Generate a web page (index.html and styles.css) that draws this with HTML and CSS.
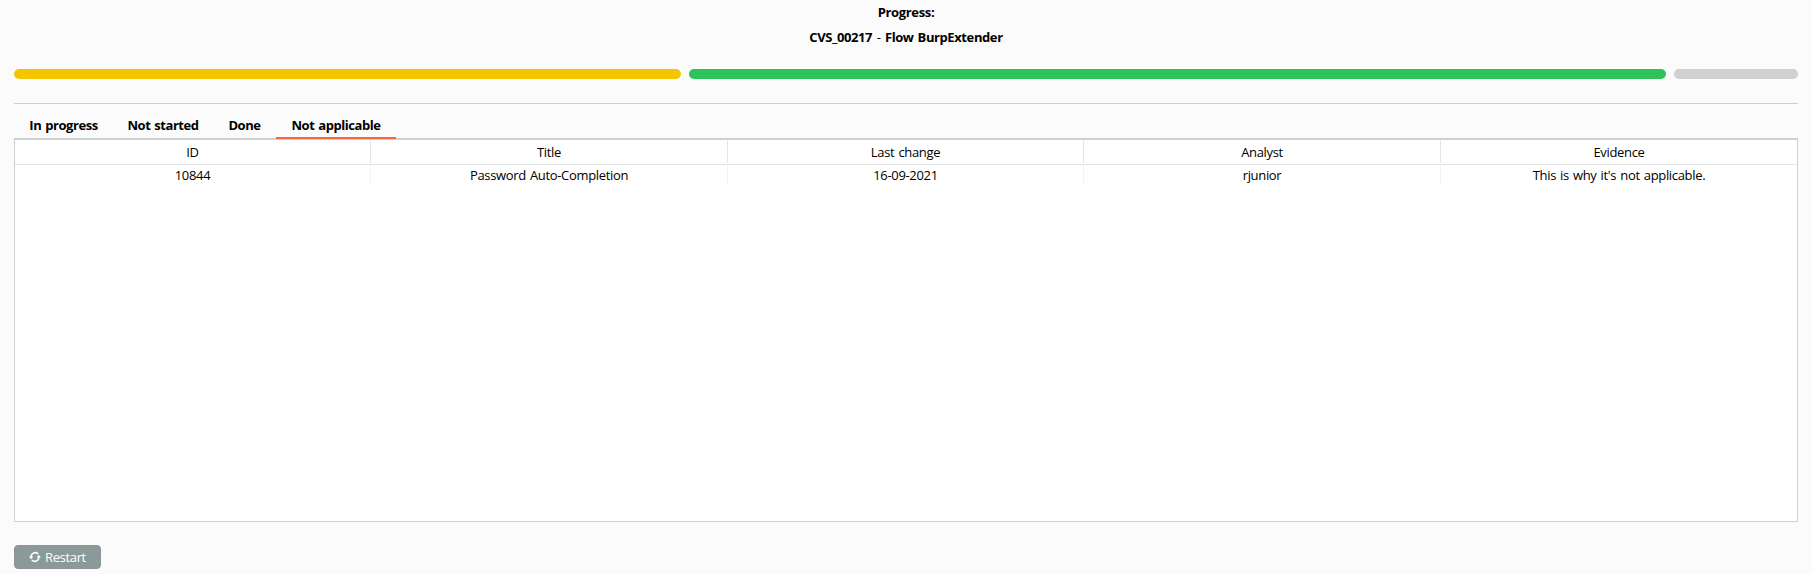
FILE: index.html
```html
<!DOCTYPE html>
<html lang="en">
<head>
<meta charset="utf-8">
<title>Progress</title>
<link rel="stylesheet" href="styles.css">
</head>
<body>
<header class="heading">
  <div class="line label">Progress:</div>
  <div class="line name">CVS_00217 <span class="dash">-</span> Flow BurpExtender</div>
</header>
<div class="progress">
  <div class="segment in-progress"></div>
  <div class="segment done"></div>
  <div class="segment remaining"></div>
</div>
<nav class="tabs">
  <div class="tab t1">In progress</div>
  <div class="tab t2">Not started</div>
  <div class="tab t3">Done</div>
  <div class="tab t4 active">Not applicable</div>
</nav>
<main class="panel">
  <div class="row head">
    <div class="cell">ID</div>
    <div class="cell">Title</div>
    <div class="cell">Last change</div>
    <div class="cell">Analyst</div>
    <div class="cell">Evidence</div>
  </div>
  <div class="row">
    <div class="cell">10844</div>
    <div class="cell">Password Auto-Completion</div>
    <div class="cell">16-09-2021</div>
    <div class="cell">rjunior</div>
    <div class="cell">This is why it's not applicable.</div>
  </div>
</main>
<button class="restart" type="button">
  <svg class="icon" viewBox="0 0 12 12" width="12" height="12" fill="none" stroke="#fff" stroke-width="1.5">
    <path d="M2 6.4C2 2.2 6 .2 9.2 2.9M10 5.6C10 9.8 6 11.8 2.8 9.1"/>
    <path d="M0 5.4H4.4L2.2 8.2zM12 6.6H7.6L9.8 3.8z" fill="#fff" stroke="none"/>
  </svg>
  <span>Restart</span>
</button>
</body>
</html>
```
FILE: styles.css
```css
* { box-sizing: border-box; }
body {
  margin: 0;
  padding: 0 14px;
  height: 574px;
  overflow: hidden;
  background: #fbfbfb;
  color: #000;
  font: 13px/18px "Open Sans", "Noto Sans", sans-serif;
  letter-spacing: -0.33px;
  word-spacing: 1px;
}
.heading {
  height: 69px;
  padding-top: 3px;
  text-align: center;
  font-weight: 700;
}
.line { height: 25px; white-space: nowrap; }
.name { letter-spacing: -0.4px; }
.dash { font-weight: 400; padding: 0 0.5px; }
.progress {
  display: grid;
  grid-template-columns: 667px 977px 124px;
  gap: 8px;
  height: 35px;
  border-bottom: 1px solid #cdcfcf;
}
.segment { height: 10px; border-radius: 5px; }
.in-progress { background: #f4c600; }
.done { background: #2dc358; }
.remaining { background: #d0d0d0; }
.tabs {
  display: flex;
  height: 35px;
  border-bottom: 1px solid #cdd0d0;
  font-weight: 700;
  letter-spacing: -0.45px;
}
.tab {
  height: 35px;
  padding-top: 12px;
  text-align: center;
  white-space: nowrap;
}
.t1 { width: 99px; }
.t2 { width: 100px; }
.t3 { width: 63px; }
.t4 { width: 120px; }
.active { border-bottom: 2px solid #f8683c; }
.panel {
  height: 383px;
  margin-bottom: 23px;
  border: 1px solid #cdd0d0;
  background: #fff;
}
.row {
  display: grid;
  grid-template-columns: 356px 357px 356px 357px 1fr;
  height: 21px;
  text-align: center;
}
.head {
  height: 25px;
  padding: 1px 0 1px;
  border-bottom: 1px solid #e3e4e4;
}
.cell {
  border-right: 1px solid #f4f4f4;
  white-space: nowrap;
  padding-top: 1px;
}
.head .cell { border-color: #e3e4e4; padding-top: 2px; }
.row .cell:last-child { border-right: 0; }
.restart {
  display: flex;
  align-items: center;
  gap: 4px;
  width: 87px;
  height: 24px;
  padding: 0 0 0 14px;
  border: 1px solid #8f93a0;
  border-radius: 4px;
  background: #8b9999;
  color: #fff;
  font: 13px/18px "Open Sans", "Noto Sans", sans-serif;
  letter-spacing: -0.35px;
}
.icon { flex: none; }
```
